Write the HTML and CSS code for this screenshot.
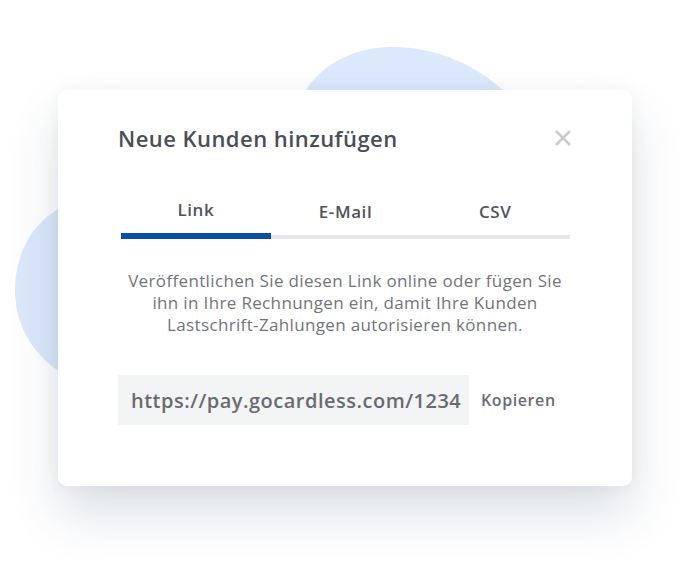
FILE: index.html
```html
<!DOCTYPE html>
<html lang="de">
<head>
<meta charset="utf-8">
<title>Neue Kunden hinzufügen</title>
<link rel="stylesheet" href="styles.css">
</head>
<body>
<svg class="blobs" width="680" height="580" viewBox="0 0 680 580" aria-hidden="true">
  <path d="M300 100 C318 64 354 47 393 47 C436 47 476 64 508 95 L508 200 L300 200 Z" fill="#dce8fb"/>
  <path d="M70 204 C36 216 15 250 15 290 C15 328 36 360 70 378 Z" fill="#dce8fb"/>
</svg>
<div class="card">
  <div class="card-head">
    <h1 class="title">Neue Kunden hinzufügen</h1>
    <button class="close" aria-label="Schließen">
      <svg width="18" height="18" viewBox="0 0 18 18"><path d="M2 2 L16 16 M16 2 L2 16" stroke="#c9cacd" stroke-width="2.6" stroke-linecap="butt"/></svg>
    </button>
  </div>
  <div class="tabs">
    <div class="tab active">Link</div>
    <div class="tab">E-Mail</div>
    <div class="tab">CSV</div>
  </div>
  <p class="desc">Veröffentlichen Sie diesen Link online oder fügen Sie<br>ihn in Ihre Rechnungen ein, damit Ihre Kunden<br>Lastschrift-Zahlungen autorisieren können.</p>
  <div class="link-row">
    <div class="link-box">https://pay.gocardless.com/1234</div>
    <button class="copy">Kopieren</button>
  </div>
</div>
</body>
</html>
```

FILE: styles.css
```css
* { box-sizing: border-box; }
html, body { margin: 0; padding: 0; background: #ffffff; }
body {
  width: 680px;
  height: 580px;
  position: relative;
  overflow: hidden;
  font-family: "Open Sans", Lato, sans-serif;
}
.blobs {
  position: absolute;
  left: 0;
  top: 0;
  z-index: 0;
}
.card {
  position: relative;
  z-index: 1;
  margin: 90px 0 0 58px;
  width: 574px;
  height: 396px;
  background: #ffffff;
  border-radius: 9px;
  padding: 32px 60px 0 60px;
  box-shadow: 0 0 18px rgba(40, 60, 100, 0.05), 0 28px 50px rgba(40, 60, 100, 0.16);
}
.card-head {
  display: flex;
  justify-content: space-between;
  align-items: center;
}
.title {
  margin: 0;
  font-size: 22px;
  line-height: 32px;
  font-weight: 600;
  letter-spacing: 0.45px;
  color: #4b4e56;
}
.close {
  border: 0;
  background: none;
  padding: 0;
  width: 18px;
  height: 18px;
  display: flex;
}
.tabs {
  display: flex;
  margin: 44px 2px 0 3px;
}
.tab {
  flex: 1;
  text-align: center;
  font-size: 17px;
  line-height: 24px;
  font-weight: 600;
  letter-spacing: 0.6px;
  color: #51545b;
  padding-bottom: 11px;
  border-bottom: 4px solid #e6e7ea;
}
.tab.active {
  border-bottom: 6px solid #0b4ea6;
}
.tab:not(.active) { padding-top: 2px; }
.desc {
  margin: 31px 0 0 0;
  text-align: center;
  font-size: 17px;
  line-height: 22px;
  letter-spacing: 0.35px;
  color: #72747b;
}
.link-row {
  display: flex;
  align-items: center;
  margin-top: 39px;
}
.link-box {
  width: 351px;
  height: 50px;
  background: #f3f4f6;
  padding: 0 13px;
  display: flex;
  align-items: center;
  font-size: 20px;
  font-weight: 600;
  letter-spacing: 0.5px;
  color: #696b72;
  white-space: nowrap;
  overflow: hidden;
}
.copy {
  border: 0;
  background: none;
  padding: 0;
  margin-left: 12px;
  font-family: inherit;
  font-size: 16px;
  font-weight: 600;
  letter-spacing: 0.6px;
  color: #696b72;
}
```
